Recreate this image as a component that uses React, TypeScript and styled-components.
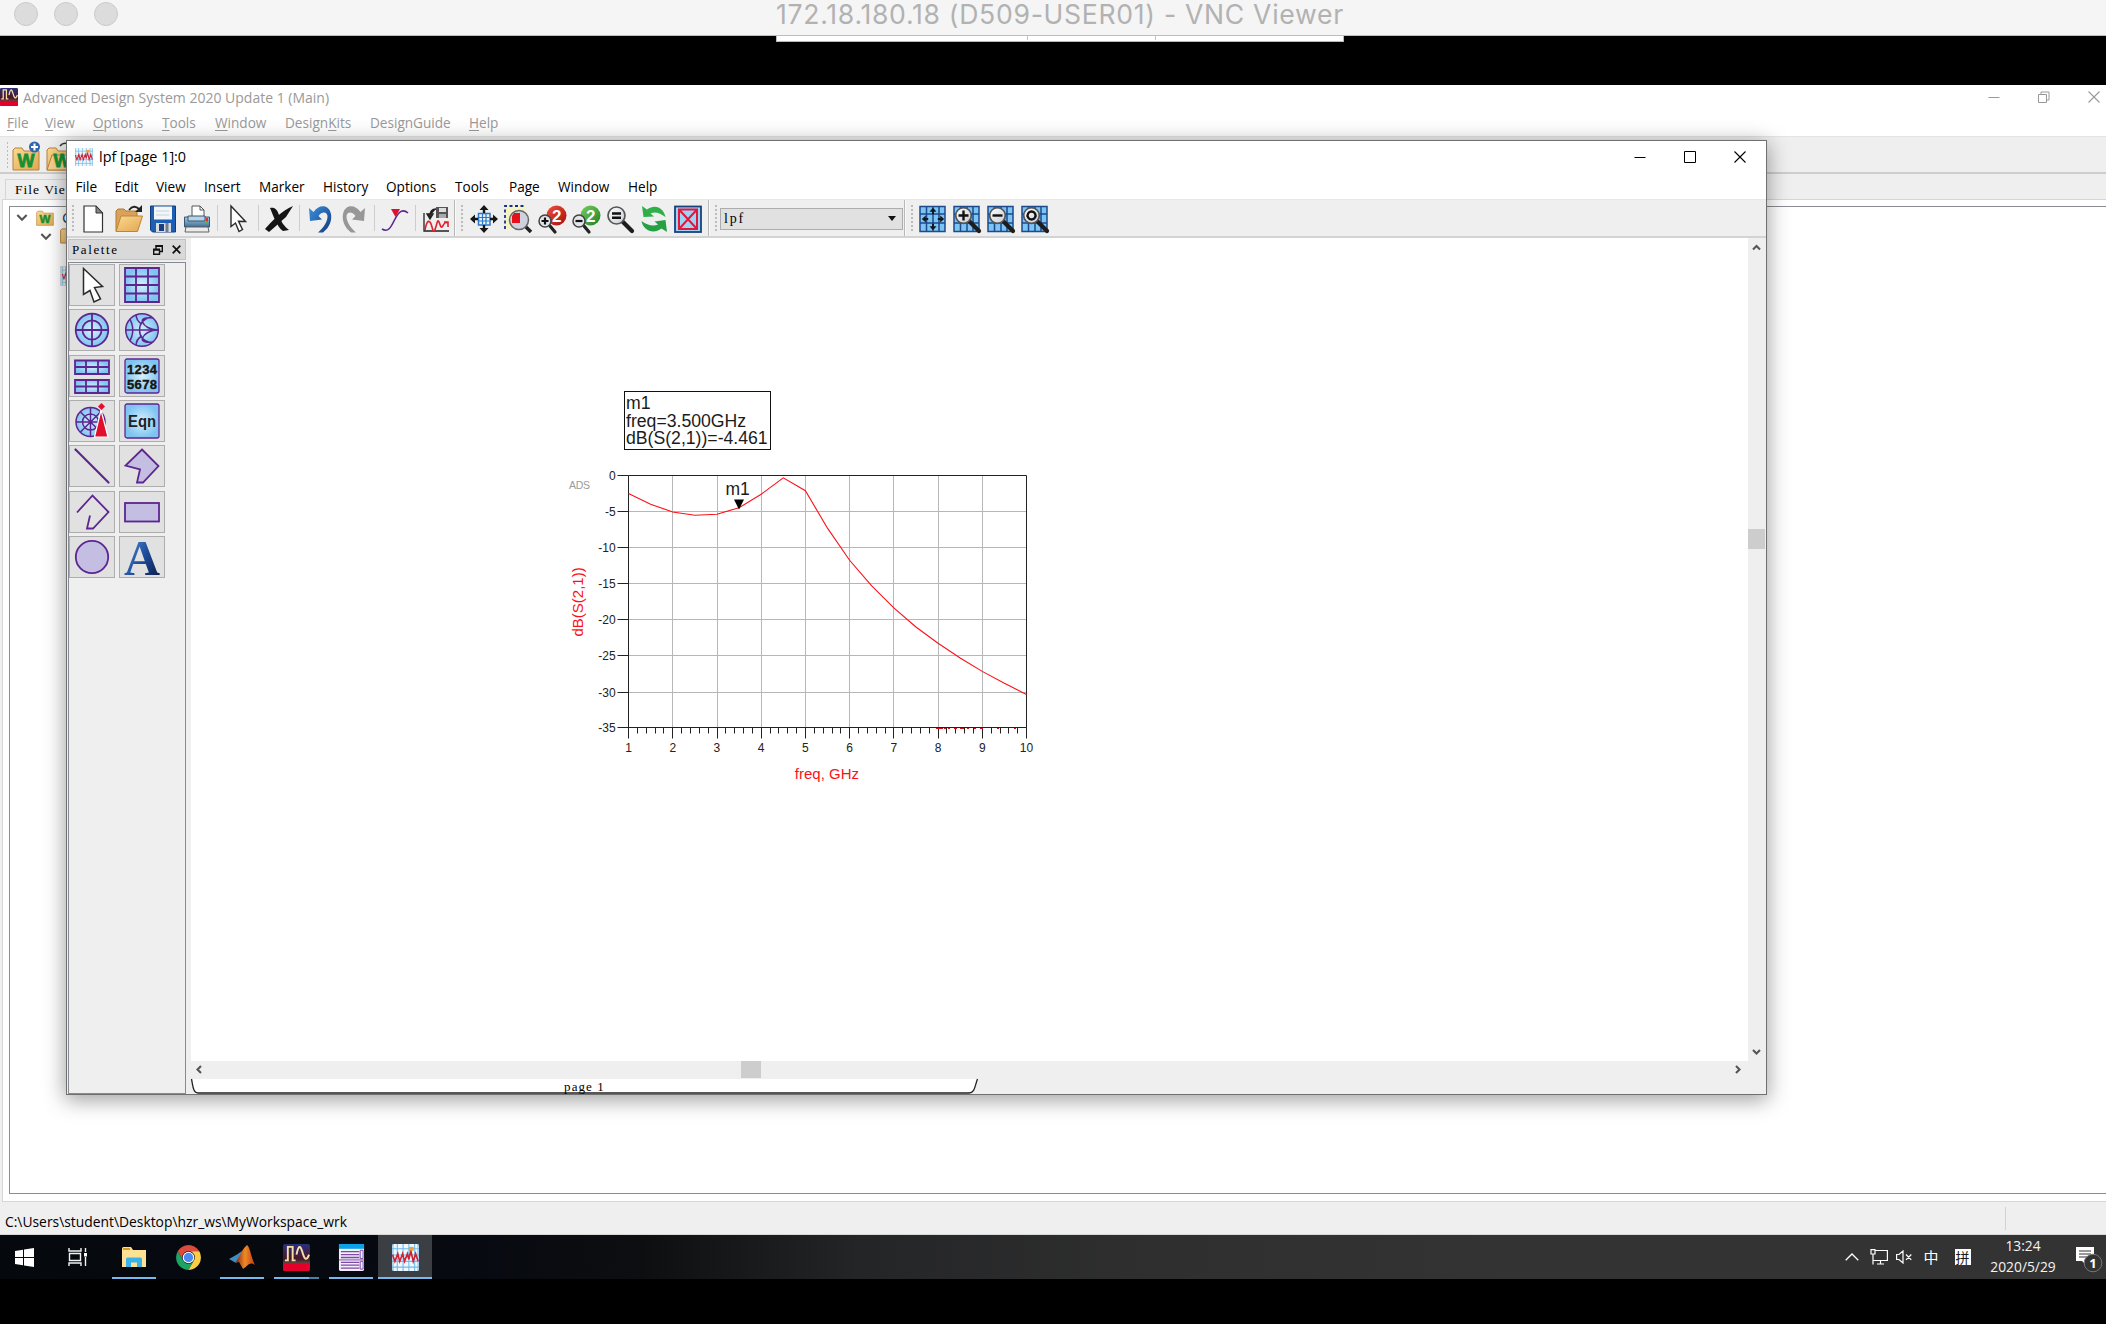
import React from "react";
import styled, { createGlobalStyle } from "styled-components";

const UI = `"Open Sans", "Noto Sans", "Noto Sans CJK SC", sans-serif`;
const BITMAP = `"Liberation Serif", "Noto Sans CJK SC", serif`;
const PURPLE = "#5c2590";

const GlobalStyle = createGlobalStyle`
  * { box-sizing: border-box; }
  body { margin: 0; background: #000; font-family: ${UI}; overflow: hidden; }
  svg { display: block; flex: none; overflow: visible; }
`;

const Screen = styled.div`
  width: 2106px;
  height: 1324px;
  display: flex;
  flex-direction: column;
  background: #000;
  overflow: hidden;
`;

/* ---------- viewer chrome ---------- */
const MacBar = styled.header`
  position: relative;
  height: 36px;
  flex: none;
  display: flex;
  align-items: flex-start;
  justify-content: center;
  background: #f5f5f5;
  border-bottom: 1px solid #bdbdbd;
`;
const Lights = styled.div`
  position: absolute;
  left: 14px;
  top: 2px;
  display: flex;
  gap: 16px;
`;
const Light = styled.i`
  width: 24px;
  height: 24px;
  border-radius: 50%;
  background: #dcdcdc;
  border: 1px solid #cbcbcb;
`;
const MacTitle = styled.h1`
  margin: 0 0 0 14px;
  font: 400 26.6px/29px Inter, sans-serif;
  letter-spacing: 0.7px;
  color: #b2b2b2;
  white-space: nowrap;
`;
const BlackStrip = styled.div`
  height: 49px;
  flex: none;
  display: flex;
  justify-content: center;
`;
const ViewerTab = styled.div`
  width: 568px;
  height: 6px;
  margin-left: 13px;
  display: grid;
  grid-template-columns: 251px 128px 1fr;
  background: #fff;
  border: 1px solid #b9b9b9;
  border-top: 0;
`;
const ViewerTabPart = styled.span`
  height: 4px;
  border-right: 1px solid #c4c4c4;
  &:last-child { border-right: 0; }
`;

/* ---------- main window ---------- */
const Desktop = styled.div`
  position: relative;
  height: 1150px;
  flex: none;
  display: flex;
  flex-direction: column;
  background: #efefef;
  overflow: hidden;
`;
const MainTitle = styled.div`
  height: 24px;
  display: flex;
  align-items: center;
  gap: 5px;
  padding-right: 6px;
  background: #fff;
  color: #999;
  font-size: 14px;
`;
const WinControls = styled.div<{ $gap: number }>`
  margin-left: auto;
  display: flex;
  align-items: center;
  gap: ${(p) => p.$gap}px;
`;
const MenuBar = styled.nav<{ $muted?: boolean }>`
  display: flex;
  align-items: center;
  flex: none;
  height: ${(p) => (p.$muted ? 27 : 23)}px;
  padding-left: ${(p) => (p.$muted ? 7 : 8.5)}px;
  padding-top: ${(p) => (p.$muted ? 1 : 0)}px;
  padding-bottom: ${(p) => (p.$muted ? 0 : 1)}px;
  background: #fff;
  color: ${(p) => (p.$muted ? "#999" : "#000")};
  font-size: 13.6px;
  line-height: 20px;
`;
const MenuItem = styled.span<{ $w: number }>`
  width: ${(p) => p.$w}px;
  white-space: nowrap;
  flex: none;
`;
const Mnemonic = styled.u`
  text-underline-offset: 2px;
  text-decoration-thickness: 1px;
`;
const MainTools = styled.div`
  height: 38px;
  flex: none;
  display: flex;
  align-items: center;
  padding: 2px 0 0 2px;
  border-top: 1px solid #e4e4e4;
  border-bottom: 2px solid #cdcdcd;
`;
const TabStrip = styled.div`
  height: 25px;
  flex: none;
  display: flex;
  align-items: flex-end;
  padding-left: 5px;
`;
const FileTab = styled.div`
  width: 92px;
  height: 20px;
  padding: 0 0 0 9px;
  border: 1px solid #d6d6d6;
  border-bottom: 0;
  font: 13.5px/19px ${BITMAP};
  letter-spacing: 1px;
  white-space: nowrap;
`;
const TreePane = styled.div`
  flex: 1;
  display: flex;
  margin-left: 2px;
  padding: 6px 0 7px 6px;
  background: #fff;
  border: 1px solid #d6d6d6;
  border-right: 0;
`;
const Tree = styled.div`
  flex: 1;
  border: 1px solid #8b8d93;
  border-right: 0;
`;
const TreeRow = styled.div<{ $indent: number; $sel?: boolean }>`
  height: 19.5px;
  width: 400px;
  margin-top: ${(p) => (p.$sel ? 20 : 0)}px;
  padding-left: ${(p) => p.$indent}px;
  display: flex;
  align-items: center;
  gap: 8px;
  color: #163e70;
  font: 15px ${UI};
  background: ${(p) => (p.$sel ? "linear-gradient(90deg, transparent 50px, #d9d9d9 50px)" : "none")};
`;
const StatusBar = styled.footer`
  height: 33px;
  flex: none;
  display: flex;
  align-items: center;
  justify-content: space-between;
  padding: 0 100px 0 5px;
  border-bottom: 1px solid #d7d7d7;
  font-size: 13.85px;
`;
const StatusText = styled.span`
  padding-top: 7px;
`;
const StatusSep = styled.i`
  width: 1px;
  height: 23px;
  background: #d2d2d2;
`;

/* ---------- data display window ---------- */
const Window = styled.section`
  position: absolute;
  left: 66px;
  top: 55px;
  width: 1701px;
  height: 955px;
  display: flex;
  flex-direction: column;
  background: #efefef;
  border: 1px solid #707070;
  box-shadow: 0 4px 20px 1px rgba(0, 0, 0, 0.38);
`;
const WinTitle = styled.div`
  height: 35px;
  flex: none;
  display: flex;
  align-items: center;
  gap: 6px;
  padding: 0 20px 4px 8px;
  background: #fff;
  font-size: 14.4px;
`;
const Toolbar = styled.div`
  height: 39px;
  flex: none;
  display: flex;
  align-items: center;
  border-top: 1px solid #e8e8e8;
  border-bottom: 2px solid #d3d3d3;
`;
const Grip = styled.i<{ $w: number }>`
  width: ${(p) => p.$w}px;
  height: 29px;
  flex: none;
  background: radial-gradient(circle at 2px 2px, #bcbcbc 1px, transparent 1.6px) 4px 0 / 4px 4px repeat-y;
`;
const Slot = styled.span<{ $w?: number }>`
  width: ${(p) => p.$w ?? 34}px;
  flex: none;
  display: flex;
  justify-content: center;
  padding-top: 2px;
`;
const Sep = styled.i`
  width: 1px;
  height: 26px;
  margin: 0 3px;
  background: #cdcdcd;
  flex: none;
`;
const Edge = styled.i<{ $l: number }>`
  width: 2px;
  align-self: stretch;
  margin-left: ${(p) => p.$l}px;
  border-left: 1px solid #b8b8b8;
  border-right: 1px solid #fafafa;
  flex: none;
`;
const Combo = styled.div`
  width: 183px;
  height: 22px;
  flex: none;
  display: flex;
  align-items: center;
  justify-content: space-between;
  margin-top: 2px;
  padding: 0 6px 1px 3px;
  background: #e1e1e1;
  border: 1px solid #adadad;
  font: 14px ${BITMAP};
  letter-spacing: 1.8px;
`;
const WinBody = styled.div`
  flex: 1;
  min-height: 0;
  display: grid;
  grid-template-columns: 119px 5px 1fr;
`;
const PaletteDock = styled.aside`
  display: flex;
  flex-direction: column;
  padding: 1px 0 0 1px;
`;
const PaletteHead = styled.div`
  height: 21px;
  flex: none;
  display: flex;
  align-items: center;
  gap: 9px;
  padding: 0 4px 0 3px;
  background: #d9d9d9;
  border: 1px solid #c3c3c3;
  font: 13px ${BITMAP};
  letter-spacing: 1.6px;
`;
const PaletteName = styled.span`
  flex: 1;
`;
const PaletteGrid = styled.div`
  flex: 1;
  margin-top: 2px;
  padding: 1px 0 0 0;
  display: grid;
  grid-template-columns: 46px 46px;
  grid-auto-rows: 42px;
  gap: 3.33px 4px;
  align-content: start;
  border: 1px solid #868a92;
`;
const PaletteButton = styled.button`
  padding: 0;
  display: flex;
  align-items: center;
  justify-content: center;
  background: #e1e1e1;
  border: 1px solid #adadad;
`;
const View = styled.div`
  display: grid;
  grid-template-columns: 1fr 18px;
  grid-template-rows: 1fr 18px 15px;
`;
const Canvas = styled.div`
  position: relative;
  background: #fff;
`;
const VScroll = styled.div`
  display: flex;
  flex-direction: column;
  align-items: center;
  justify-content: space-between;
  padding: 5px 1px 5px 0;
  position: relative;
`;
const HScroll = styled.div`
  display: flex;
  align-items: center;
  justify-content: space-between;
  padding: 0 6px 1px 4px;
  position: relative;
`;
const VThumb = styled.i`
  position: absolute;
  top: 291px;
  left: 0;
  width: 17px;
  height: 20px;
  background: #cdcdcd;
`;
const HThumb = styled.i`
  position: absolute;
  left: 550px;
  top: 0;
  width: 20px;
  height: 17px;
  background: #cdcdcd;
`;
const PageTabs = styled.div`
  grid-column: 1 / 3;
  display: grid;
`;
const TabShape = styled.svg`
  grid-area: 1 / 1;
`;
const TabName = styled.span`
  grid-area: 1 / 1;
  width: 787px;
  text-align: center;
  font: 13px/15px ${BITMAP};
  letter-spacing: 1.1px;
`;
const MarkerBox = styled.div`
  position: absolute;
  left: 433px;
  top: 153px;
  width: 147px;
  height: 58.5px;
  padding: 3px 0 0 1px;
  border: 1px solid #111;
  background: #fff;
  font: 17.65px/17.7px "Liberation Sans", sans-serif;
  color: #1b1b1b;
  white-space: nowrap;
`;
const ChartSvg = styled.svg`
  position: absolute;
  left: 359px;
  top: 222px;
  font-family: "Liberation Sans", sans-serif;
`;

/* ---------- taskbar ---------- */
const Taskbar = styled.div`
  height: 44px;
  flex: none;
  display: flex;
  align-items: stretch;
  background: linear-gradient(90deg, #05080d 0, #070a10 480px, #0d0e10 640px, #242527 860px, #2f2f2f 1150px, #333 1500px);
`;
const Task = styled.div<{ $w: number; $active?: boolean }>`
  width: ${(p) => p.$w}px;
  flex: none;
  display: flex;
  align-items: center;
  justify-content: center;
  position: relative;
  background: ${(p) => (p.$active ? "#3b3e42" : "transparent")};
`;
const Underline = styled.i<{ $full?: boolean; $split?: boolean }>`
  position: absolute;
  bottom: 0;
  left: ${(p) => (p.$full ? 0 : 5)}px;
  right: ${(p) => (p.$full ? 0 : 5)}px;
  height: 2px;
  background: ${(p) => (p.$split ? "linear-gradient(90deg,#76b9ed 35px,#4c7ea6 35px)" : "#76b9ed")};
`;
const Tray = styled.div`
  margin-left: auto;
  width: 264px;
  display: flex;
  align-items: center;
  color: #fff;
`;
const TrayItem = styled.span<{ $w: number }>`
  width: ${(p) => p.$w}px;
  flex: none;
  display: flex;
  justify-content: center;
`;
const Ime = styled.span`
  font: 15px/20px "Noto Sans CJK SC", sans-serif;
`;
const ImeBox = styled.span`
  width: 16px;
  height: 16px;
  display: grid;
  place-items: center;
  background: #fff;
  color: #1c1c1c;
  font: 14px/16px "Noto Sans CJK SC", sans-serif;
`;
const Clock = styled.div`
  width: 82px;
  padding-bottom: 2px;
  text-align: center;
  font-size: 13.8px;
  line-height: 21px;
  color: #f4f4f4;
`;

/* ---------- drawings ---------- */
const DefsHolder = styled.svg`
  position: absolute;
`;
const SharedDefs = () => (
  <DefsHolder width="0" height="0">
    <defs>
      <radialGradient id="cell"><stop offset="0" stopColor="#d6f0fd" /><stop offset="1" stopColor="#7fc4f0" /></radialGradient>
      <linearGradient id="folder" x1="0" y1="0" x2="1" y2="1"><stop offset="0" stopColor="#fbd993" /><stop offset="1" stopColor="#e3a64e" /></linearGradient>
      <linearGradient id="blueA" x1="0" y1="0" x2="1" y2="1"><stop offset="0" stopColor="#5ba3e6" /><stop offset="0.5" stopColor="#1f4f9e" /><stop offset="1" stopColor="#0a1338" /></linearGradient>
      <linearGradient id="undo" x1="0" y1="0" x2="1" y2="1"><stop offset="0" stopColor="#3b93de" /><stop offset="1" stopColor="#14387d" /></linearGradient>
      <linearGradient id="red" x1="0" y1="0" x2="1" y2="1"><stop offset="0" stopColor="#f0503c" /><stop offset="1" stopColor="#a50f0f" /></linearGradient>
      <linearGradient id="green" x1="0" y1="0" x2="1" y2="1"><stop offset="0" stopColor="#7cd15a" /><stop offset="1" stopColor="#1f7d2a" /></linearGradient>
      <linearGradient id="lens" x1="0" y1="0" x2="1" y2="1"><stop offset="0" stopColor="#fff" /><stop offset="1" stopColor="#c9ccd4" /></linearGradient>
      <linearGradient id="adsbg" x1="0" y1="0" x2="0" y2="1"><stop offset="0" stopColor="#2a2f7d" /><stop offset="0.55" stopColor="#4a1528" /><stop offset="0.7" stopColor="#5a4340" /></linearGradient>
      <linearGradient id="flame" x1="0" y1="0" x2="1" y2="0"><stop offset="0" stopColor="#7a1c14" /><stop offset="0.5" stopColor="#f08a24" /><stop offset="1" stopColor="#c03a18" /></linearGradient>
      <linearGradient id="printer" x1="0" y1="0" x2="0" y2="1"><stop offset="0" stopColor="#a9cbe2" /><stop offset="1" stopColor="#3e6f95" /></linearGradient>
      <clipPath id="disc"><circle cx="18" cy="18" r="16.300" /></clipPath>
    </defs>
  </DefsHolder>
);

const Ic = ({ s = 28, children }: { s?: number; children: React.ReactNode }) => (
  <svg width={s} height={s} viewBox="0 0 28 28">{children}</svg>
);

const NewDoc = () => (
  <Ic><path d="M3 1H15L21.500 8V27H3Z" fill="#fff" stroke="#333" strokeWidth="1.200" /><path d="M15 1V8H21.500Z" fill="#888" stroke="#333" /></Ic>
);
const OpenFolder = () => (
  <Ic>
    <path d="M1 26V6L3 4H9L11 6H22V12" fill="#d9a25a" stroke="#b07a2e" />
    <path d="M1 26.5 6 11H27.5L22.5 26.5Z" fill="url(#folder)" stroke="#bd8636" />
    <path d="M14 5Q19-1 24 4" fill="none" stroke="#222" strokeWidth="1.8" /><path d="M27 0V7H20Z" fill="#222" />
  </Ic>
);
const Save = () => (
  <Ic>
    <path d="M1.500 1H26.500V27H3.500L1.500 25Z" fill="#1d5fb5" stroke="#123c78" />
    <rect x="5" y="1.500" width="18" height="13" fill="#f3f6f8" /><path d="M7 6H20M7 10H20" stroke="#c9d2d8" />
    <path d="M7 18H22V27H7Z" fill="#d7dade" /><rect x="10" y="19" width="5" height="7" fill="#1c3e7a" /><path d="M18 18V27" stroke="#6d7d94" strokeWidth="3" />
  </Ic>
);
const Printer = () => (
  <Ic>
    <path d="M9 1H17L21 5V14H9Z" fill="#fff" stroke="#555" /><path d="M17 1V5H21" fill="none" stroke="#555" />
    <path d="M1.500 12H26.500V22H1.500Z" fill="url(#printer)" stroke="#39566c" /><path d="M5 11H22V16H5Z" fill="#b6d4e6" stroke="#39566c" />
    <path d="M24 13V16" stroke="#d93030" strokeWidth="2" /><path d="M24 16V19" stroke="#59b040" strokeWidth="2" />
    <path d="M3 22H25L26 27H2Z" fill="#ecebe8" stroke="#5d676d" />
  </Ic>
);
const Arrow = ({ s = 28 }: { s?: number }) => (
  <Ic s={s}><path d="M7 1 21.500 16.500 14.500 16.200 18.500 24.500 15 26.500 11.500 18 7 21.500Z" fill="#fff" stroke="#2a2a2a" strokeWidth="1.4" /></Ic>
);
const BigX = () => (
  <Ic><path d="M0 24C5 18 17 5 28 1L21 12C14 18 9 23 4 27Z" fill="#151515" /><path d="M5 3C8 2 12 3 14 10S19 21 24 25L18 26C12 22 8 10 5 3Z" fill="#151515" /></Ic>
);
const Curl = ({ flip, gray }: { flip?: boolean; gray?: boolean }) => (
  <Ic>
    <g transform={flip ? "translate(28 0) scale(-1 1)" : undefined}>
      <path d="M3 3 4 16 16 14.500 12.500 11C17 5 22 8 21.500 12C21 18 17 23 12 27.500H17C24 22 26 15 25 9C23-1 13-1 7.500 7Z" fill={gray ? "#979797" : "url(#undo)"} />
    </g>
  </Ic>
);
const SCurve = () => (
  <Ic><path d="M1 24C7 28 10 22 13 16S20 2 27 8" fill="none" stroke={PURPLE} strokeWidth="1.6" /><path d="M10 4H19L14.500 12Z" fill="#e0102c" /></Ic>
);
const PlotSave = () => (
  <Ic>
    <path d="M2 8V26H27" fill="none" stroke="#222" strokeWidth="1.300" />
    <path d="M3 25C5 14 8 14 10 22S13 25 15 18 18 24 20 22 22 16 26 18M22 17H26V22" fill="none" stroke="#e5202e" strokeWidth="1.600" />
    <path d="M14 2H26V13H14Z" fill="#555" /><rect x="17" y="3" width="7" height="4" fill="#ddd" /><rect x="17" y="9" width="7" height="4" fill="#aaa" />
    <path d="M14 4C9 4 8 7 8 11M5 9H11L8 14Z" fill="#222" stroke="#222" strokeWidth="1.400" />
  </Ic>
);
const ArrowsOut = () => (
  <g fill="#161616">
    <path d="M14 0 18.500 5H15.200V8H12.800V5H9.500Z" /><path d="M14 28 18.500 23H15.200V20H12.800V23H9.500Z" />
    <path d="M0 14 5 9.500V12.800H8V15.200H5V18.500Z" /><path d="M28 14 23 9.500V12.800H20V15.200H23V18.500Z" />
  </g>
);
const FitView = () => (
  <Ic><rect x="8.500" y="8.500" width="11.500" height="11.500" fill="#e8f5ff" stroke="#2b76c9" strokeWidth="1.500" /><path d="M12.500 9V19.500M16 9V19.500M9 12.500H19.500M9 16H19.500" stroke="#2b76c9" strokeWidth="1.200" /><ArrowsOut /></Ic>
);
const ZoomArea = () => (
  <Ic>
    <path d="M1 1H22V12H8V24H1Z" fill="#f4f3c4" /><path d="M1 24V1H22" fill="none" stroke="#1a2e8f" strokeWidth="1.800" strokeDasharray="3 2.500" />
    <path d="M20 20 27 27" stroke="#222" strokeWidth="3.500" /><circle cx="15" cy="15" r="9.500" fill="#cfd2dd" stroke="#666" strokeWidth="1.500" /><path d="M10 8H16V18H8V11Z" fill="#e5101c" />
  </Ic>
);
const Magnifier = ({ sign, ring = 8.5, cx = 10.5 }: { sign: string; ring?: number; cx?: number }) => (
  <>
    <path d={`M${cx + 6} ${cx + 6}L26 26`} stroke="#1d1d1d" strokeWidth="4.200" strokeLinecap="round" />
    <circle cx={cx} cy={cx} r={ring} fill="url(#lens)" stroke="#555" strokeWidth="1.700" />
    <path d={sign} fill="none" stroke="#111" strokeWidth="2.400" />
  </>
);
const Zoom2 = ({ out }: { out?: boolean }) => (
  <Ic>
    <path d="M12 21 17 27" stroke="#222" strokeWidth="3.200" strokeLinecap="round" />
    <circle cx="18.500" cy="10.500" r="10" fill={out ? "url(#green)" : "url(#red)"} />
    <text x="18.800" y="16.500" fontSize="17" fontWeight="700" fontFamily="Liberation Sans" fill="#fff" textAnchor="middle">2</text>
    <circle cx="7" cy="16" r="6" fill="#e3e6ea" stroke="#444" strokeWidth="1.500" />
    <path d={out ? "M3.500 16H10.500" : "M3.500 16H10.500M7 12.500V19.500"} stroke="#111" strokeWidth="2.200" />
  </Ic>
);
const ZoomEq = () => <Ic><Magnifier sign="M6 8.500H15M6 12.700H15" /></Ic>;
const Refresh = () => (
  <Ic>
    <path d="M2 1 3.500 12 14 11.500 10.500 8.500C15 6 20 8 25.500 12C24 4 16-2 7 4.500Z" fill="#2fae4a" />
    <path d="M27 27 25.500 15 14.500 16.500 18 19.500C13 22 7 20 1.500 16C3 25 13 30 21.500 23.500Z" fill="#26a043" />
  </Ic>
);
const BoxX = () => (
  <Ic><rect x="1" y="1.500" width="26" height="25.500" fill="#9fd3f5" stroke="#17427d" strokeWidth="1.800" /><path d="M5 4.500H23V24H5ZL23 24M23 4.500 5 24" fill="none" stroke="#e3173a" strokeWidth="2" /></Ic>
);
const BlueGrid = () => (
  <><rect x="1" y="1.500" width="25" height="25" fill="#7cc4f3" /><path d="M1 1.500H26V26.500H1ZM7.500 1V27M14 1V27M20 1V27M1 9H26M1 18H26" fill="none" stroke="#1c4a8c" strokeWidth="1.500" /></>
);
const GridFit = () => <Ic><BlueGrid /><g transform="translate(2.800 2.800) scale(.8)"><ArrowsOut /></g></Ic>;
const GridZoom = ({ sign }: { sign: string }) => <Ic><BlueGrid /><Magnifier sign={sign} ring={7.8} /></Ic>;

const WFolder = ({ s = 28, open }: { s?: number; open?: boolean }) => (
  <Ic s={s}>
    <path d="M1 27V7L3 5H10L12 8H27V27Z" fill="url(#folder)" stroke="#b5833a" />
    {open && <path d="M1 27 6 12H30V27Z" fill="#f7d08a" stroke="#b5833a" />}
    <text x={open ? 16 : 14} y="24" fontSize="18" fontWeight="700" fontFamily="Liberation Sans" fill="#159033" stroke="#159033" strokeWidth=".8" textAnchor="middle">W</text>
    {s > 20 && !open && <><circle cx="22.500" cy="4" r="5.500" fill="#2f66ad" /><path d="M19 4H26M22.500 .5V7.500" stroke="#fff" strokeWidth="2" /></>}
    {open && <path d="M14 3Q18-2 24 2" fill="none" stroke="#333" strokeWidth="1.600" />}
  </Ic>
);
const PlainFolder = () => (
  <Ic s={18}><path d="M1 25V5L3 3H10L12 6H27V25Z" fill="url(#folder)" stroke="#b5833a" strokeWidth="1.500" /></Ic>
);
const AdsLogo = ({ s }: { s: number }) => (
  <Ic s={s}>
    <rect width="28" height="28" rx="2" fill="url(#adsbg)" /><path d="M0 20H28V26Q28 28 26 28H2Q0 28 0 26Z" fill="#e4002b" />
    <path d="M2 17H5V3H10V17H13M14 11C16 1 18 1 20 8S24 19 27 11" fill="none" stroke="#f6dfa4" strokeWidth="2" />
  </Ic>
);
const PlotLogo = ({ s }: { s: number }) => (
  <Ic s={s}>
    <rect width="28" height="28" rx="2" fill="#eef8fe" /><path d="M1 0V28M5.500 0V28M11.500 0V28M17.500 0V28M23.500 0V28M27 0V28M0 5H28M0 11.500H28M0 18H28M0 24H28" stroke="#72b9e6" strokeWidth="1.100" />
    <rect x="17.500" y="3" width="5" height="4" fill="#f0a13c" />
    <path d="M.5 11 3 18 6 10 8 18 11 10 13 18 16 10 17.500 16 19.500 7 22 18 24.500 10 27 18" fill="none" stroke="#cf2436" strokeWidth="1.700" />
  </Ic>
);
const ListLogo = () => (
  <Ic s={27}>
    <rect x="1" width="26" height="28" rx="1.500" fill="#f5eefa" /><path d="M1 0H27V5H1Z" fill="#0aa2e6" />
    <path d="M3 8H22M3 11H22M3 14H22M3 19H22M3 22H22M3 25H22" stroke="#7c4aa8" strokeWidth="1.300" /><path d="M1 16.500H27" stroke="#7c4aa8" />
    <path d="M23 6.500H26V15H23ZM23 18H26V26H23Z" fill="none" stroke="#7c4aa8" />
  </Ic>
);

/* Palette drawings share a 36px box */
const P = ({ children, sw = 1.8 }: { children: React.ReactNode; sw?: number }) => (
  <svg width="36" height="36" viewBox="0 0 36 36" fill="none" stroke={PURPLE} strokeWidth={sw}>{children}</svg>
);
const palette: React.ReactNode[] = [
  <svg width="36" height="36" viewBox="0 0 36 36"><path d="M9.500 1.500 28.500 19.500 20.500 20.500 26.500 32 20 35 16 23.500 9.500 27.500Z" fill="#fff" stroke="#2a2a2a" strokeWidth="1.500" /></svg>,
  <P><path d="M1 1H35V35H1Z" fill="url(#cell)" /><path d="M12 1V35M24 1V35M1 9.500H35M1 18H35M1 26.500H35" /></P>,
  <P><circle cx="18" cy="18" r="16.300" fill="url(#cell)" /><circle cx="18" cy="18" r="9.600" /><path d="M18 1V35M1 18H35" /></P>,
  <P sw={1.5}>
    <circle cx="18" cy="18" r="16.300" fill="url(#cell)" />
    <g clipPath="url(#disc)"><path d="M1.500 18H34M34 18C26 18 20 14 18.500 10S22 5 32 6M34 18C26 18 20 22 18.500 26S22 31 32 30M27 5C19 7 15.500 12 15.500 18S19 29 27 31M12 2C12 7 14 10 18 12M12 34C12 29 14 26 18 24M5 6C10 13 10 23 5 30" /></g>
  </P>,
  <P><path d="M1 2.500H35V16H1Z" fill="url(#cell)" /><path d="M1 22H35V35H1Z" fill="url(#cell)" /><path d="M12 2.500V16M24 2.500V16M1 9H35M12 22V35M24 22V35M1 28.500H35" /></P>,
  <svg width="36" height="36" viewBox="0 0 36 36"><rect x="1" y="1" width="34" height="34" rx="2" fill="url(#cell)" stroke={PURPLE} strokeWidth="1.300" /><g fontFamily="Liberation Sans" fontWeight="700" fontSize="13" fill="#151515" stroke="#151515" strokeWidth=".4"><text x="3" y="15.500" textLength="30">1234</text><text x="3" y="31" textLength="30">5678</text></g></svg>,
  <svg width="36" height="36" viewBox="0 0 36 36"><g fill="none" stroke={PURPLE} strokeWidth="1.500"><circle cx="16.500" cy="19" r="14.500" fill="url(#cell)" /><circle cx="16.500" cy="19" r="8" /><path d="M16.500 4.500V33.500M2 19H31M6.500 9 26.500 29M26.500 9 6.500 29" /></g><path d="M27 7 34 34H20.500Z" fill="#e0102c" stroke="#fff" strokeWidth="1.200" /><path d="M27.500 0 31 3.500 27.500 7 24 3.500Z" fill="#e0102c" /></svg>,
  <svg width="36" height="36" viewBox="0 0 36 36"><rect x="1" y="1" width="34" height="34" rx="2" fill="url(#cell)" stroke={PURPLE} strokeWidth="1.300" /><text x="4" y="23.500" textLength="28" lengthAdjust="spacingAndGlyphs" fontFamily="Liberation Sans" fontWeight="700" fontSize="16" fill="#222">Eqn</text></svg>,
  <P sw={2.2}><path d="M1.500 1.500 34.500 34.500" strokeLinecap="round" /></P>,
  <P><path d="M18 1.500 34.500 18 19 34.500H13L16 21.500 1.500 17.500Z" fill="#c4bfe2" /></P>,
  <P><path d="M3 18.500 18.500 1.500 34.500 18 19 34.500H13L16 21.500" /></P>,
  <P><rect x="1" y="9" width="34" height="18.500" fill="#c4bfe2" /></P>,
  <P><circle cx="18" cy="18" r="16.200" fill="#c4bfe2" /></P>,
  <svg width="36" height="36" viewBox="0 0 36 36"><text x="18" y="35.500" textAnchor="middle" fontFamily="Liberation Serif" fontWeight="700" fontSize="51" textLength="36" lengthAdjust="spacingAndGlyphs" fill="url(#blueA)">A</text></svg>,
];

const Chevron = ({ d, c = "#555", w = 2.1, s = 9 }: { d: string; c?: string; w?: number; s?: number }) => (
  <svg width={s} height={s} viewBox="0 0 9 9"><path d={d} fill="none" stroke={c} strokeWidth={w} /></svg>
);
const UP = "M1 6.500 4.500 3 8 6.500";
const DOWN = "M1 3 4.500 6.500 8 3";
const LEFT = "M6 1 2.500 4.500 6 8";
const RIGHT = "M3 1 6.500 4.500 3 8";

const Minimize = ({ c }: { c: string }) => <svg width="12" height="12"><path d="M.5 6.500H11.500" stroke={c} /></svg>;
const Maximize = ({ c }: { c: string }) => <svg width="12" height="12"><path d="M.5 .5H11.500V11.500H.5Z" fill="none" stroke={c} /></svg>;
const Restore = ({ c }: { c: string }) => <svg width="12" height="12"><path d="M.5 3.500H8.500V11.500H.5ZM3 3.500V1H11V9H8.500" fill="none" stroke={c} /></svg>;
const Close = ({ c }: { c: string }) => <svg width="12" height="12"><path d="M.5 .5 11.500 11.500M11.500 .5 .5 11.500" stroke={c} strokeWidth="1.100" /></svg>;

/* ---------- response plot ---------- */
const trace: [number, number][] = [
  [1, -2.5], [1.5, -4], [2, -5.05], [2.5, -5.5], [3, -5.38], [3.5, -4.46], [4, -2.6], [4.5, -0.32], [5, -2.1],
  [5.5, -7.3], [6, -11.75], [6.5, -15.3], [7, -18.35], [7.5, -21], [8, -23.25], [8.5, -25.3], [9, -27.15], [9.5, -28.8], [10, -30.35],
];
const X0 = 78.5, Y0 = 15.5, DX = 44.22, DY = 7.214;
const px = (f: number) => X0 + (f - 1) * DX;
const py = (v: number) => Y0 - v * DY;
const snap = (v: number) => Math.round(v - 0.4) + 0.5;

const ResponsePlot = () => {
  const freqs = Array.from({ length: 10 }, (_, i) => i + 1);
  const levels = Array.from({ length: 8 }, (_, i) => -5 * i);
  const minors = Array.from({ length: 46 }, (_, i) => 1 + i / 5);
  const bottom = 267.5, right = snap(px(10));
  return (
    <ChartSvg width="500" height="340">
      {freqs.slice(1, -1).map((f) => <path key={f} d={`M${snap(px(f))} ${Y0}V${bottom}`} stroke="#b7b7b7" />)}
      {levels.slice(1, -1).map((v) => <path key={v} d={`M${X0} ${snap(py(v))}H${right}`} stroke="#b7b7b7" />)}
      <path d={`M${X0} ${Y0}H${right}V${bottom}H${X0}Z`} fill="none" stroke="#222" />
      {levels.map((v) => {
        const y = v === -35 ? bottom : snap(py(v));
        return (
          <g key={v}><path d={`M${X0 - 11} ${y}H${X0}`} stroke="#222" /><text x="65.700" y={y + 4} fontSize="12" textAnchor="end" fill="#222">{v}</text></g>
        );
      })}
      {minors.map((f) => <path key={f} d={`M${snap(px(f))} ${bottom}v6`} stroke="#222" />)}
      {freqs.map((f) => (
        <g key={f}><path d={`M${snap(px(f))} ${bottom}v11`} stroke="#222" /><text x={px(f)} y="291.500" fontSize="12" textAnchor="middle" fill="#222">{f}</text></g>
      ))}
      <path d={`M386 ${bottom + 1}h7m1 0h2m2 0h2m4 0h3m3 0h4m3 0h2m5 0h2m4 0h3m14 0h2m15 0h2`} stroke="#d4101c" />
      <polyline points={trace.map(([f, v]) => `${px(f)},${py(v)}`).join(" ")} fill="none" stroke="#fb1118" strokeWidth="1.100" />
      <path d="M184 39.500H194L189 49.500Z" fill="#000" />
      <text x="175.500" y="34.500" fontSize="17.500" fill="#1b1b1b">m1</text>
      <text x="19" y="28.500" fontSize="10.500" textLength="21" fill="#9b9b9b">ADS</text>
      <text x="244.800" y="318.500" fontSize="15" fill="#fb1118">freq, GHz</text>
      <text transform="translate(33 176.500) rotate(-90)" fontSize="15" fill="#fb1118">dB(S(2,1))</text>
    </ChartSvg>
  );
};

const mainMenu: [string, number, number][] = [
  ["File", 0, 38], ["View", 0, 48], ["Options", 0, 69], ["Tools", 0, 53], ["Window", 0, 70], ["DesignKits", 6, 85], ["DesignGuide", -1, 99], ["Help", 0, 40],
];
const winMenu: [string, number][] = [
  ["File", 39], ["Edit", 41.5], ["View", 48], ["Insert", 55], ["Marker", 64], ["History", 63], ["Options", 69], ["Tools", 54], ["Page", 49], ["Window", 70], ["Help", 40],
];

const slots = (items: React.ReactNode[]) => items.map((n, i) => <Slot key={i}>{n}</Slot>);

export default function App() {
  return (
    <>
      <GlobalStyle />
      <SharedDefs />
      <Screen>
        <MacBar>
          <Lights><Light /><Light /><Light /></Lights>
          <MacTitle>172.18.180.18 (D509-USER01) - VNC Viewer</MacTitle>
        </MacBar>
        <BlackStrip><ViewerTab><ViewerTabPart /><ViewerTabPart /><ViewerTabPart /></ViewerTab></BlackStrip>

        <Desktop>
          <MainTitle>
            <AdsLogo s={18} />
            <span>Advanced Design System 2020 Update 1 (Main)</span>
            <WinControls $gap={38}><Minimize c="#999" /><Restore c="#999" /><Close c="#999" /></WinControls>
          </MainTitle>
          <MenuBar $muted>
            {mainMenu.map(([t, k, w]) => (
              <MenuItem key={t} $w={w}>
                {k < 0 ? t : <>{t.slice(0, k)}<Mnemonic>{t[k]}</Mnemonic>{t.slice(k + 1)}</>}
              </MenuItem>
            ))}
          </MenuBar>
          <MainTools><Grip $w={6} /><Slot $w={35}><WFolder /></Slot><Slot $w={34}><WFolder open /></Slot></MainTools>
          <TabStrip><FileTab>File View</FileTab></TabStrip>
          <TreePane>
            <Tree>
              <TreeRow $indent={6}><Chevron d={DOWN} s={12} w={1.600} /><WFolder s={18} /><span>C:/Users</span></TreeRow>
              <TreeRow $indent={30}><Chevron d={DOWN} s={12} w={1.600} /><PlainFolder /></TreeRow>
              <TreeRow $indent={52} $sel><PlotLogo s={18} /></TreeRow>
            </Tree>
          </TreePane>
          <StatusBar><StatusText>C:\Users\student\Desktop\hzr_ws\MyWorkspace_wrk</StatusText><StatusSep /></StatusBar>

          <Window>
            <WinTitle>
              <PlotLogo s={18} /><span>lpf [page 1]:0</span>
              <WinControls $gap={38}><Minimize c="#000" /><Maximize c="#000" /><Close c="#000" /></WinControls>
            </WinTitle>
            <MenuBar>{winMenu.map(([t, w]) => <MenuItem key={t} $w={w}>{t}</MenuItem>)}</MenuBar>
            <Toolbar>
              <Grip $w={11} />
              {slots([<NewDoc />, <OpenFolder />, <Save />, <Printer />])}<Sep />
              {slots([<Arrow />])}<Sep />
              {slots([<BigX />])}<Sep />
              {slots([<Curl />, <Curl flip gray />])}<Sep />
              {slots([<SCurve />])}<Sep />
              {slots([<PlotSave />])}
              <Edge $l={1} /><Grip $w={11} />
              {slots([<FitView />, <ZoomArea />, <Zoom2 />, <Zoom2 out />, <ZoomEq />, <Refresh />, <BoxX />])}
              <Edge $l={3} /><Grip $w={10} />
              <Combo><span>lpf</span><svg width="8" height="5"><path d="M0 0H8L4 5Z" fill="#111" /></svg></Combo>
              <Edge $l={1} /><Grip $w={10} />
              {slots([<GridFit />, <GridZoom sign="M5.500 10.500H15.500M10.500 5.500V15.500" />, <GridZoom sign="M5.500 10.500H15.500" />, <GridZoom sign="M10.500 6.500A4 4 0 1 0 10.600 6.500Z" />])}
            </Toolbar>
            <WinBody>
              <PaletteDock>
                <PaletteHead>
                  <PaletteName>Palette</PaletteName>
                  <svg width="10" height="10"><path d="M.7 4.700H6.500V9.300H.7ZM3 4V1H9.300V6.500H7" fill="none" stroke="#111" strokeWidth="1.400" /><path d="M0 4.500H7M2.500 1H10" stroke="#111" strokeWidth="2" /></svg>
                  <svg width="9" height="9"><path d="M.7 .7 8.300 8.300M8.300 .7 .7 8.300" stroke="#111" strokeWidth="1.700" /></svg>
                </PaletteHead>
                <PaletteGrid>{palette.map((n, i) => <PaletteButton key={i}>{n}</PaletteButton>)}</PaletteGrid>
              </PaletteDock>
              <span />
              <View>
                <Canvas>
                  <MarkerBox>m1<br />freq=3.500GHz<br />dB(S(2,1))=-4.461</MarkerBox>
                  <ResponsePlot />
                </Canvas>
                <VScroll><Chevron d={UP} /><VThumb /><Chevron d={DOWN} /></VScroll>
                <HScroll><Chevron d={LEFT} /><HThumb /><Chevron d={RIGHT} /></HScroll>
                <span />
                <PageTabs>
                  <TabShape width="787" height="15"><path d="M0 0C2 7 2 14 7 14H778C784 14 784 6 786.500 0Z" fill="#fff" /><path d="M.5 0C2 7 2 14 7 14H778C784 14 784 6 786.500 0" fill="none" stroke="#222" strokeWidth="1.300" /></TabShape>
                  <TabName>page 1</TabName>
                </PageTabs>
              </View>
            </WinBody>
          </Window>
        </Desktop>

        <Taskbar>
          <Task $w={48}><svg width="19" height="19"><path d="M0 3 8 1.800V9H0ZM9 1.600 19 0V9H9ZM0 10H8V17.200L0 16ZM9 10H19V19L9 17.400Z" fill="#fff" /></svg></Task>
          <Task $w={59}>
            <svg width="19" height="18" fill="none" stroke="#f2f2f2" strokeWidth="1.400"><path d="M1 0V3H13V0M1.500 5.500H12.500V12.500H1.500ZM1 18V15H13V18M17.500 0V4M17.500 9V18" /><rect x="16" y="5" width="3" height="3.500" fill="#fff" stroke="none" /></svg>
          </Task>
          <Task $w={54}>
            <svg width="24" height="21"><path d="M0 1.500Q0 0 1.500 0H9L11 3H24V20H0Z" fill="#fde293" /><path d="M1 2H8" stroke="#d99b1e" strokeWidth="2" /><path d="M4 20V12Q4 10.500 5.500 10.500H18.500Q20 10.500 20 12V20H15V15.500H9V20Z" fill="#39b3ea" /></svg>
            <Underline />
          </Task>
          <Task $w={54}>
            <svg width="25" height="25" viewBox="-12.500 -12.500 25 25">
              <path d="M-10.800-6.200A12.500 12.500 0 0 1 10.800-6.200L0-6.200A6 6 0 0 0-5.300 3Z" fill="#dd4b3e" />
              <path d="M-10.800-6.200A12.500 12.500 0 0 0 0 12.500L5.400 3A6 6 0 0 1-5.300 3Z" fill="#1da362" />
              <path d="M10.800-6.200A12.500 12.500 0 0 1 0 12.500L5.400 3A6 6 0 0 0 0-6.200Z" fill="#fdcd45" />
              <circle r="5.800" fill="#fff" /><circle r="4.700" fill="#4a8af4" />
            </svg>
          </Task>
          <Task $w={54}>
            <svg width="26" height="25"><path d="M0 14 8 9.500 13 6 11 14 7 18Z" fill="#3c8fc4" /><path d="M18 0C14 3 12 8 8 15L6 18 10 17 14 24C19 21 20 16 26 20C22 12 21 2 18 0Z" fill="url(#flame)" /></svg>
            <Underline />
          </Task>
          <Task $w={55}><AdsLogo s={27} /><Underline $split /></Task>
          <Task $w={54}><ListLogo /><Underline /></Task>
          <Task $w={54} $active><PlotLogo s={27} /><Underline $full /></Task>
          <Tray>
            <TrayItem $w={20}><svg width="14" height="8"><path d="M.7 7.300 7 1 13.300 7.300" fill="none" stroke="#fff" strokeWidth="1.300" /></svg></TrayItem>
            <TrayItem $w={33}><svg width="18" height="16" fill="none" stroke="#fff" strokeWidth="1.200"><path d="M5 1.500H17.400V11.500H3.500M1 .6H5V5H1ZM3 5V15.500M10.500 11.500V15M7 15H14" /></svg></TrayItem>
            <TrayItem $w={18}><svg width="16" height="14" fill="none" stroke="#fff" strokeWidth="1.200"><path d="M.6 4.500H3L7 1V13L3 9.500H.6ZM10 4.500 15.300 9.800M15.300 4.500 10 9.800" /></svg></TrayItem>
            <TrayItem $w={36}><Ime>中</Ime></TrayItem>
            <TrayItem $w={27}><ImeBox>拼</ImeBox></TrayItem>
            <TrayItem $w={6} />
            <Clock>13:24<br />2020/5/29</Clock>
            <TrayItem $w={6} />
            <TrayItem $w={36}>
              <svg width="28" height="28"><path d="M2 4H20V18H12V22L8 18H2Z" fill="#fff" /><path d="M5 8H17M5 11H17M5 14H13" stroke="#333" strokeWidth="1.200" /><circle cx="19" cy="20" r="8.800" fill="#333" stroke="#777" /><text x="19" y="25" fill="#fff" fontSize="13" fontWeight="700" textAnchor="middle" fontFamily="Open Sans">1</text></svg>
            </TrayItem>
          </Tray>
        </Taskbar>
      </Screen>
    </>
  );
}
